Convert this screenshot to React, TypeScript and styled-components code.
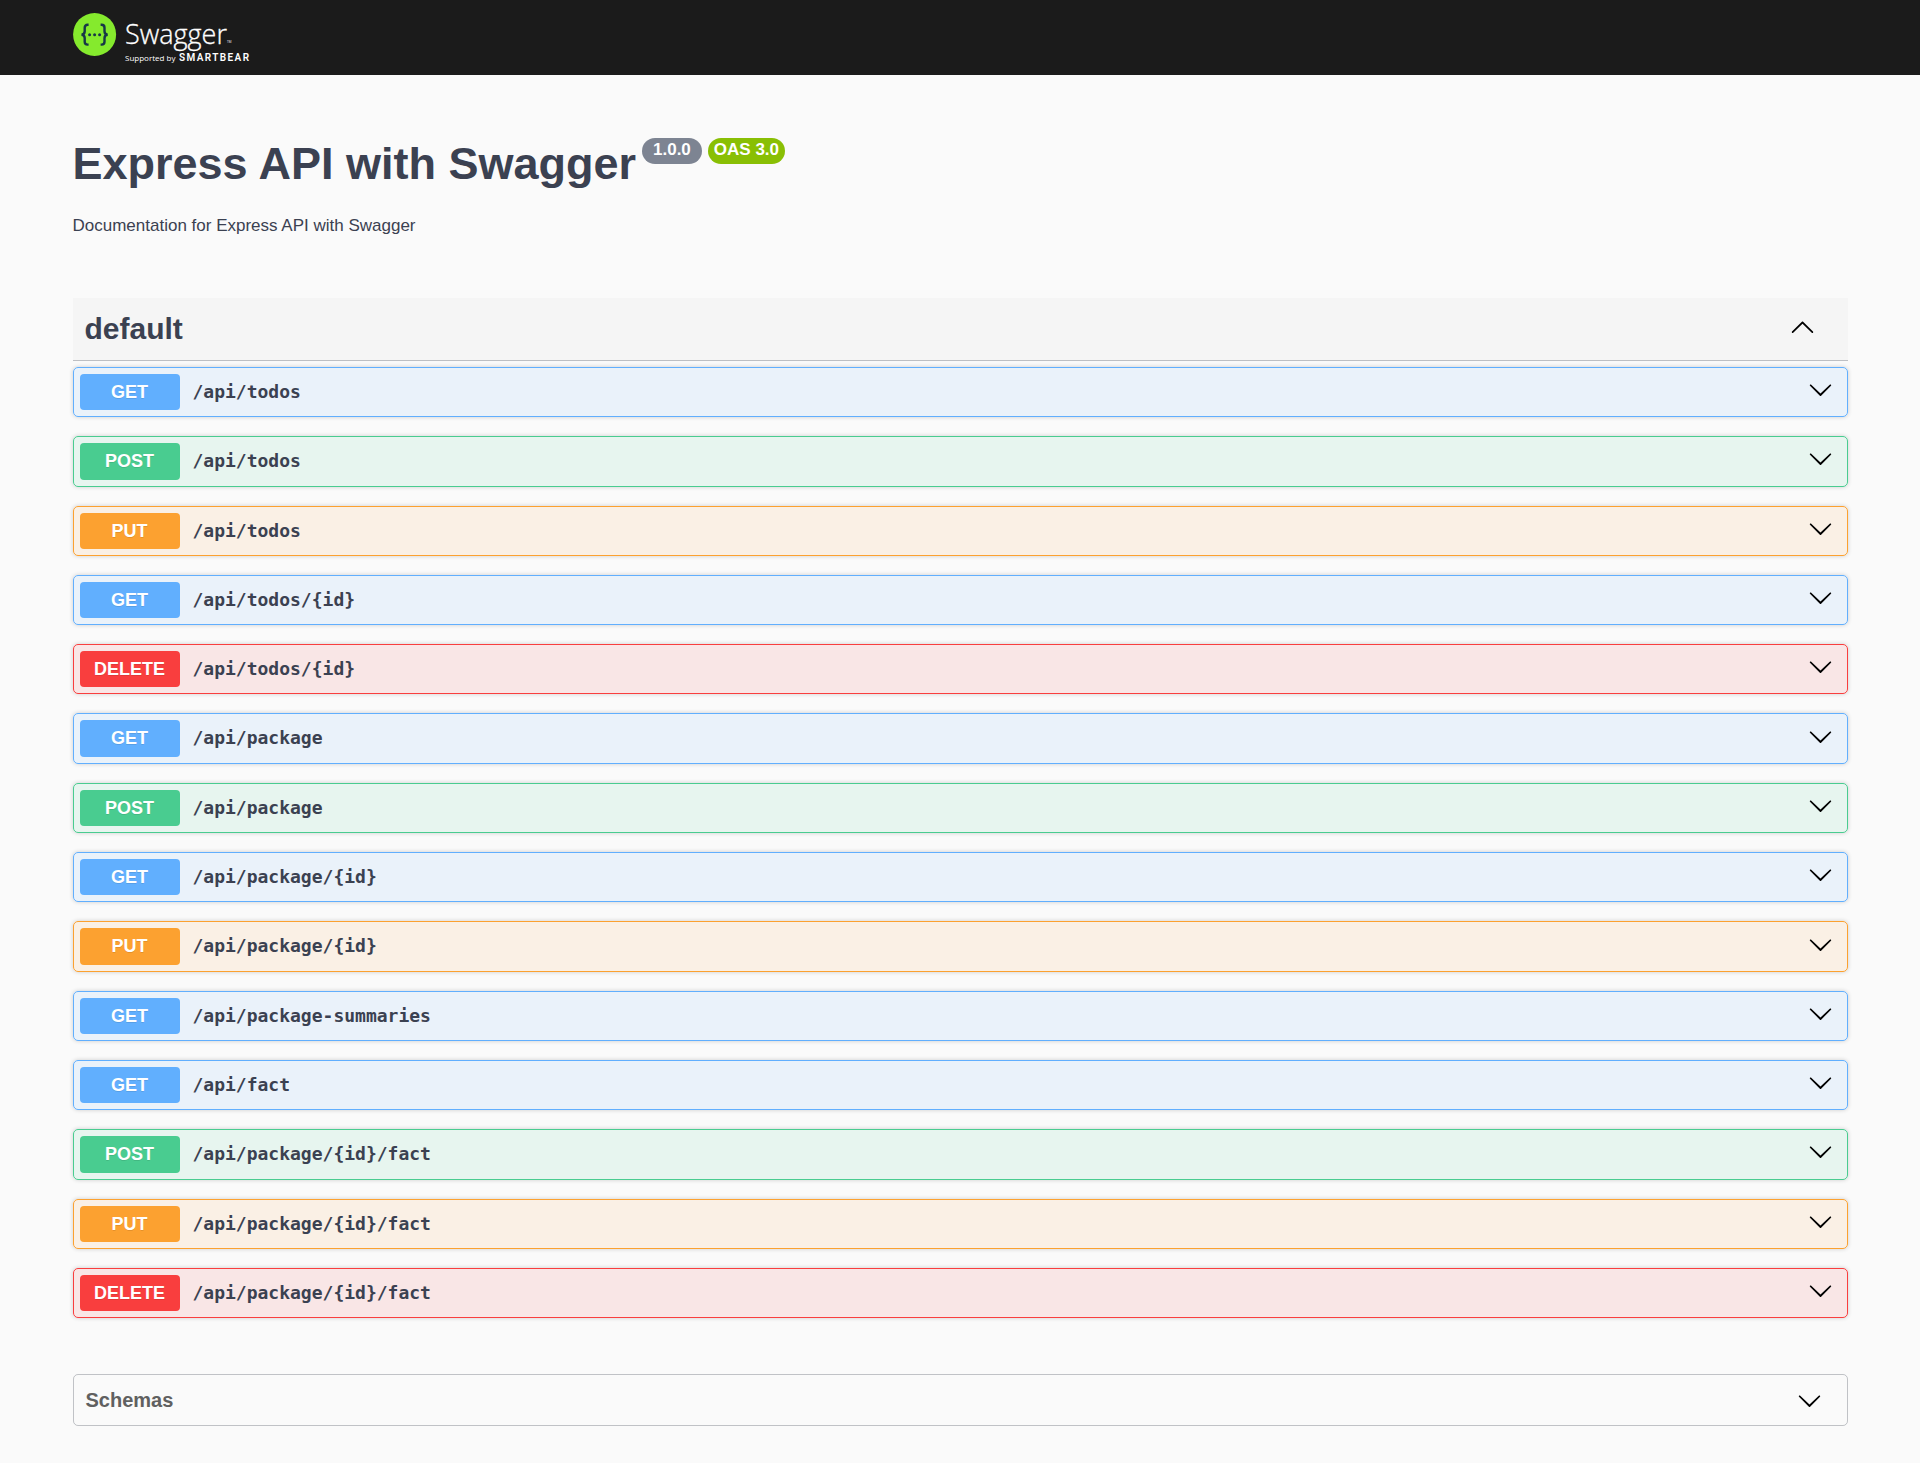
import React, { useState } from "react";
import styled, { createGlobalStyle } from "styled-components";

type Method = "GET" | "POST" | "PUT" | "DELETE";

const METHOD_COLORS: Record<Method, { main: string; tint: string }> = {
  GET: { main: "#61affe", tint: "rgba(97, 175, 254, 0.1)" },
  POST: { main: "#49cc90", tint: "rgba(73, 204, 144, 0.1)" },
  PUT: { main: "#fca130", tint: "rgba(252, 161, 48, 0.1)" },
  DELETE: { main: "#f93e3e", tint: "rgba(249, 62, 62, 0.1)" },
};

const OPERATIONS: { method: Method; path: string }[] = [
  { method: "GET", path: "/api/todos" },
  { method: "POST", path: "/api/todos" },
  { method: "PUT", path: "/api/todos" },
  { method: "GET", path: "/api/todos/{id}" },
  { method: "DELETE", path: "/api/todos/{id}" },
  { method: "GET", path: "/api/package" },
  { method: "POST", path: "/api/package" },
  { method: "GET", path: "/api/package/{id}" },
  { method: "PUT", path: "/api/package/{id}" },
  { method: "GET", path: "/api/package-summaries" },
  { method: "GET", path: "/api/fact" },
  { method: "POST", path: "/api/package/{id}/fact" },
  { method: "PUT", path: "/api/package/{id}/fact" },
  { method: "DELETE", path: "/api/package/{id}/fact" },
];

const GlobalStyle = createGlobalStyle`
  *, *::before, *::after {
    box-sizing: border-box;
  }
  body {
    margin: 0;
    background: #fafafa;
    color: #3b4151;
    font-family: Arial, "Liberation Sans", sans-serif;
  }
  h1, h2, p, ul {
    margin: 0;
    padding: 0;
  }
  button {
    margin: 0;
    border: 0;
    background: none;
    color: inherit;
    font: inherit;
    text-align: left;
    cursor: pointer;
  }
`;

const Wrapper = styled.div`
  width: 100%;
  max-width: 1825px;
  margin: 0 auto;
  padding: 0 25px;
`;

const Topbar = styled.header`
  padding: 12px 0;
  background: #1b1b1b;
`;

const LogoLink = styled.a`
  display: inline-block;
  vertical-align: top;
  text-decoration: none;
`;

const LogoSvg = styled.svg`
  display: block;
  width: 180px;
  height: 51px;
`;

const Info = styled.section`
  display: flex;
  flex-direction: column;
  gap: 25px;
  padding: 63px 0 61px;
`;

const TitleRow = styled.div`
  display: flex;
  flex-wrap: wrap;
  align-items: flex-start;
  gap: 6px;
`;

const Title = styled.h1`
  font-size: 45px;
  line-height: 52px;
  font-weight: 700;
`;

const Stamp = styled.span<{ $color: string; $pad: number }>`
  height: 26px;
  padding: 0 ${(p) => p.$pad}px;
  border-radius: 13px;
  background: ${(p) => p.$color};
  color: #fff;
  font-size: 17px;
  line-height: 24px;
  font-weight: 700;
`;

const Description = styled.p`
  font-size: 17px;
  line-height: 22px;
`;

const TagHeading = styled.h2`
  border-bottom: 1px solid rgba(59, 65, 81, 0.3);
  background: #f5f5f5;
  font-size: 30px;
  line-height: 38px;
  font-weight: 700;
`;

const TagToggle = styled.button`
  display: flex;
  align-items: center;
  justify-content: space-between;
  width: 100%;
  padding: 12px 33px 12px 12px;
`;

const Operations = styled.ul`
  display: flex;
  flex-direction: column;
  gap: 19px;
  padding-top: 6px;
  list-style: none;
`;

const Operation = styled.li<{ $method: Method }>`
  border: 1px solid ${(p) => METHOD_COLORS[p.$method].main};
  border-radius: 5px;
  background: ${(p) => METHOD_COLORS[p.$method].tint};
  box-shadow: 0 0 4px rgba(0, 0, 0, 0.19);
`;

const OperationToggle = styled.button`
  display: flex;
  align-items: center;
  gap: 13px;
  width: 100%;
  padding: 6px 14px 6px 6px;
  font-size: 18px;
  line-height: 1.35;
`;

const MethodBadge = styled.span<{ $method: Method }>`
  flex: none;
  width: 100px;
  padding: 6px 0;
  border-radius: 4px;
  background: ${(p) => METHOD_COLORS[p.$method].main};
  color: #fff;
  font-weight: 700;
  text-align: center;
  text-shadow: 0 1px 0 rgba(0, 0, 0, 0.1);
`;

const Path = styled.span`
  flex: 1;
  min-width: 0;
  font-family: Consolas, "DejaVu Sans Mono", monospace;
  font-weight: 700;
  word-break: break-word;
`;

const Models = styled.section`
  margin: 56px 0 37px;
  border: 1px solid rgba(59, 65, 81, 0.3);
  border-radius: 5px;
`;

const ModelsHeading = styled.h2`
  color: #606060;
  font-size: 20px;
  line-height: 26px;
  font-weight: 700;
`;

const ModelsToggle = styled.button`
  display: flex;
  align-items: center;
  justify-content: space-between;
  width: 100%;
  padding: 12px 25px 12px 12px;
`;

const ChevronSvg = styled.svg<{ $raised?: boolean }>`
  flex: none;
  display: block;
  width: 25px;
  height: 25px;
  margin-bottom: ${(p) => (p.$raised ? 5 : 0)}px;
  fill: #000;
`;

function Chevron({ up, raised }: { up?: boolean; raised?: boolean }) {
  return (
    <ChevronSvg viewBox="0 0 20 20" $raised={raised} aria-hidden="true">
      {up ? (
        <path d="M17.418 14.908c.272.268.709.268.979 0s.271-.701 0-.969l-7.908-7.83c-.27-.268-.707-.268-.979 0l-7.908 7.83c-.27.268-.27.701 0 .969.271.268.709.268.979 0L10 7.767z" />
      ) : (
        <path d="M17.418 6.109c.272-.268.709-.268.979 0s.271.701 0 .969l-7.908 7.83c-.27.268-.707.268-.979 0l-7.908-7.83c-.27-.268-.27-.701 0-.969.271-.268.709-.268.979 0L10 13.25z" />
      )}
    </ChevronSvg>
  );
}

function Logo() {
  return (
    <LogoSvg viewBox="0 0 180 51" role="img" aria-label="Swagger, supported by SmartBear">
      <circle cx="21.6" cy="22.5" r="21.5" fill="#85ea2d" />
      <g fill="none" stroke="#173647" strokeWidth="2.4">
        <path d="M15.6 12.8h-1q-2.9 0-2.9 2.9v3.6q0 3.2-3.2 3.4q3.2.2 3.2 3.4v3.6q0 2.9 2.9 2.9h1" />
        <path d="M27.6 12.8h1q2.9 0 2.9 2.9v3.6q0 3.2 3.2 3.4q-3.2.2-3.2 3.4v3.6q0 2.9-2.9 2.9h-1" />
      </g>
      <g fill="#173647">
        <circle cx="16.6" cy="22.7" r="1.5" />
        <circle cx="21.6" cy="22.7" r="1.5" />
        <circle cx="26.6" cy="22.7" r="1.5" />
      </g>
      <g fill="#fff">
        <text x="52" y="32" fontFamily="'Open Sans', sans-serif" fontSize="27" fontWeight="300" stroke="#fff" strokeWidth="0.3">
          Swagger
        </text>
        <text x="154" y="31" fontFamily="'Open Sans', sans-serif" fontSize="3">
          TM
        </text>
        <text x="52" y="49" fontFamily="'Open Sans', sans-serif" fontSize="8">
          Supported by
        </text>
        <text x="106" y="49" fontFamily="Roboto, sans-serif" fontSize="10" fontWeight="600" letterSpacing="1.4">
          SMARTBEAR
        </text>
      </g>
    </LogoSvg>
  );
}

export default function App() {
  const [open, setOpen] = useState(true);

  return (
    <>
      <GlobalStyle />
      <Topbar>
        <Wrapper>
          <LogoLink href="#">
            <Logo />
          </LogoLink>
        </Wrapper>
      </Topbar>
      <Wrapper as="main">
        <Info>
          <TitleRow>
            <Title>Express API with Swagger</Title>
            <Stamp $color="#7d8492" $pad={11}>1.0.0</Stamp>
            <Stamp $color="#89bf04" $pad={6}>OAS 3.0</Stamp>
          </TitleRow>
          <Description>Documentation for Express API with Swagger</Description>
        </Info>
        <section>
          <TagHeading>
            <TagToggle type="button" aria-expanded={open} onClick={() => setOpen(!open)}>
              default
              <Chevron up={open} raised />
            </TagToggle>
          </TagHeading>
          {open && (
            <Operations>
              {OPERATIONS.map(({ method, path }) => (
                <Operation key={method + path} $method={method}>
                  <OperationToggle type="button">
                    <MethodBadge $method={method}>{method}</MethodBadge>
                    <Path>{path}</Path>
                    <Chevron raised />
                  </OperationToggle>
                </Operation>
              ))}
            </Operations>
          )}
        </section>
        <Models>
          <ModelsHeading>
            <ModelsToggle type="button">
              Schemas
              <Chevron />
            </ModelsToggle>
          </ModelsHeading>
        </Models>
      </Wrapper>
    </>
  );
}
